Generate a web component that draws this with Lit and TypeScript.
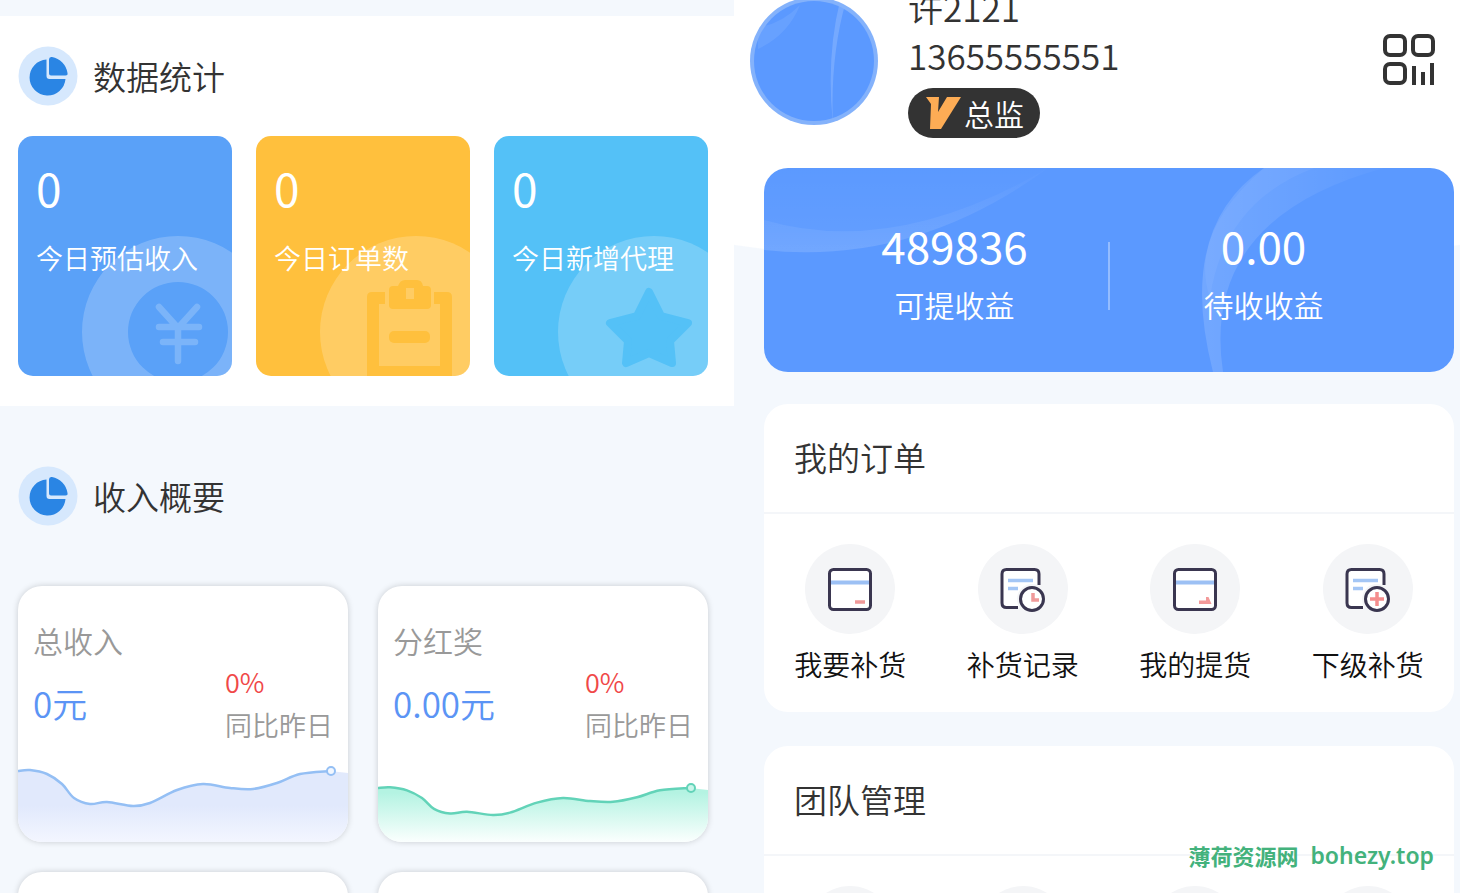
import { LitElement, html, css, svg } from "lit";
import { customElement, property } from "lit/decorators.js";

type Point = [number, number];

const WAVE: Point[] = [
  [0, 24], [12, 23], [29, 27], [44, 37], [56, 51], [72, 57], [89, 55], [115, 59],
  [132, 56], [159, 43], [185, 37], [212, 41], [235, 42], [259, 36], [282, 27], [312, 24],
];

/** Smooth curve through the points (Catmull-Rom turned into cubic Béziers). */
function curve(points: Point[]): string {
  let d = `M${points[0][0]} ${points[0][1]}`;
  for (let i = 0; i < points.length - 1; i++) {
    const p0 = points[Math.max(0, i - 1)];
    const p1 = points[i];
    const p2 = points[i + 1];
    const p3 = points[Math.min(points.length - 1, i + 2)];
    const c1 = [p1[0] + (p2[0] - p0[0]) / 6, p1[1] + (p2[1] - p0[1]) / 6];
    const c2 = [p2[0] - (p3[0] - p1[0]) / 6, p2[1] - (p3[1] - p1[1]) / 6];
    d += `C${c1.join(" ")} ${c2.join(" ")} ${p2.join(" ")}`;
  }
  return d;
}

@customElement("wave-chart")
export class WaveChart extends LitElement {
  @property() tone: "blue" | "green" = "blue";

  static styles = css`
    :host { display: block; }
    svg { display: block; width: 100%; height: 95px; }
    .line { fill: none; stroke-width: 2.5; }
    .blue { stroke: #94bff4; }
    .green { stroke: #62d3b8; }
    .dot { fill: #f2f7ff; stroke-width: 2; }
    .dot.green { fill: #c9f5ea; }
  `;

  render() {
    const blue = this.tone === "blue";
    const pts = blue ? WAVE : WAVE.map(([x, y]): Point => [x, 41 + (y - 24) * 0.77]);
    const end = pts[pts.length - 1];
    const line = curve(pts);
    const area = `${line}L330 ${end[1] + 2}V95H0Z`;
    const top = blue ? "#e1e9fc" : "#b4f3e2";
    const bottom = blue ? "#f3f6ff" : "#fbfffe";
    return html`
      <svg viewBox="0 0 330 95" preserveAspectRatio="none" aria-hidden="true">
        <defs>
          <linearGradient id="fill" x1="0" y1="0" x2="0" y2="1">
            <stop offset=${blue ? "0.5" : "0.1"} stop-color=${top}></stop>
            <stop offset="1" stop-color=${bottom}></stop>
          </linearGradient>
        </defs>
        <path d=${area} fill="url(#fill)"></path>
        <path class="line ${this.tone}" d=${line}></path>
        <circle class="dot ${this.tone}" cx=${end[0] + 1} cy=${end[1]} r="4"></circle>
      </svg>`;
  }
}

const pieIcon = html`
  <svg class="pie" viewBox="0 0 60 60" aria-hidden="true">
    <circle cx="30" cy="30" r="29.5" fill="#d6e8fd"></circle>
    <path d="M28 13.500A18 18 0 1 0 47 33H31Q28 33 28 30Z" fill="#2a85e4" transform="translate(0.500 0)"></path>
    <path d="M31 13.500Q31 10.500 34 11A19 19 0 0 1 49.500 27Q50 29.500 47.500 29.500H33Q31 29.500 31 27.500Z" fill="#2a85e4"></path>
  </svg>`;

const statArt = {
  income: svg`
    <path fill="#fff" fill-opacity=".2" fill-rule="evenodd" d="M64 196a96 96 0 1 0 192 0a96 96 0 1 0-192 0ZM110 196a50 50 0 1 0 100 0a50 50 0 1 0-100 0Z"/>
    <path d="M141 171l19 21 19-21M160 192v33M141 191h40M145 206h32" fill="none" stroke="#7bb4f9" stroke-width="6.500" stroke-linecap="round" stroke-linejoin="round"/>`,
  orders: svg`
    <circle cx="160" cy="196" r="96" fill="#fff" fill-opacity=".2"/>
    <g fill="#ffc03d">
      <path fill-rule="evenodd" d="M116 156h13v12h-6v62h61v-62h-6v-12h13q5 0 5 5v79h-85v-79q0-5 5-5Z"/>
      <path fill-rule="evenodd" d="M137 150h5q2-6 7-6h12q5 0 6 6h4q4 0 4 4v15q0 4-4 4h-34q-4 0-4-4v-15q0-4 4-4ZM150 152v11h8v-11Z"/>
      <rect x="133" y="195" width="41" height="12" rx="5"/>
    </g>`,
  agents: svg`
    <circle cx="160" cy="196" r="96" fill="#fff" fill-opacity=".2"/>
    <path d="M155 156L167 180L194 187L176 205L178 227L155 217L132 227L134 205L116 187L143 180Z" fill="#54c1f7" stroke="#54c1f7" stroke-width="8" stroke-linejoin="round"/>`,
};

const STATS = [
  { value: "0", label: "今日预估收入", tone: "income", art: statArt.income },
  { value: "0", label: "今日订单数", tone: "orders", art: statArt.orders },
  { value: "0", label: "今日新增代理", tone: "agents", art: statArt.agents },
];

const note = svg`
  <path d="M28 25.500H56Q61 25.500 61 30V63.500H28Q24 63.500 24 59V30Q24 25.500 28 25.500Z" fill="#fff"/>
  <path d="M61 41V30Q61 25.500 56.500 25.500H28.500Q24 25.500 24 30V59Q24 63.500 28.500 63.500H40" fill="none" stroke="#3a3650" stroke-width="3"/>
  <path d="M30 36.500H55" stroke="#a4c6f5" stroke-width="3.500"/>
  <path d="M30 44.500H40" stroke="#a4c6f5" stroke-width="3.500"/>
  <circle cx="54" cy="55" r="15" fill="#f4f5f7"/>
  <circle cx="54" cy="55" r="11.500" fill="#fff" stroke="#3a3650" stroke-width="3"/>`;

const box = svg`
  <rect x="24.500" y="25.500" width="41" height="40" rx="4" fill="#fff" stroke="#3a3650" stroke-width="3"/>
  <path d="M26 38.500H64" stroke="#9cc0f4" stroke-width="4"/>`;

const ORDER_ITEMS = [
  { label: "我要补货", icon: svg`${box}<path d="M50 58H60" stroke="#f09a9a" stroke-width="3.500"/>` },
  { label: "补货记录", icon: svg`${note}<path d="M55 49V56H61" fill="none" stroke="#f09a9a" stroke-width="3.500"/>` },
  { label: "我的提货", icon: svg`${box}<path d="M49 60V56.500H56V53H58.500L61.500 60Z" fill="#f39a9a"/>` },
  { label: "下级补货", icon: svg`${note}<path d="M54 48V62M47 55H61" stroke="#f58d8d" stroke-width="3.500"/>` },
];

const OVERVIEW = [
  { title: "总收入", amount: "0元", rate: "0%", tone: "blue" },
  { title: "分红奖", amount: "0.00元", rate: "0%", tone: "green" },
];

@customElement("app-root")
export class AppRoot extends LitElement {
  static styles = css`
    :host {
      display: block;
      font-family: "Noto Sans CJK SC", "Noto Sans", sans-serif;
      font-weight: 350;
      color: #333;
    }
    * { box-sizing: border-box; }
    h2, p { margin: 0; font-weight: inherit; }
    button { font: inherit; color: inherit; background: none; border: 0; padding: 0; cursor: pointer; }

    .page {
      position: relative;
      display: grid;
      grid-template-columns: 734fr 726fr;
      height: 100vh;
      overflow: hidden;
      background: #f4f8fd;
    }

    .data { padding-top: 16px; min-width: 0; }
    .section { padding: 30px 26px 30px 18px; }
    .section.white { background: #fff; }
    .section.overview { padding-top: 60px; }
    .heading { display: flex; align-items: center; gap: 15px; height: 60px; font-size: 33px; line-height: 48px; }
    .pie { width: 60px; height: 60px; flex: none; }

    .stats { display: grid; grid-template-columns: repeat(3, 1fr); gap: 24px; margin-top: 30px; }
    .stat {
      position: relative;
      height: 240px;
      padding: 24px 18px;
      border-radius: 15px;
      overflow: hidden;
      color: #fff;
    }
    .stat.income { background: #5aa1f8; }
    .stat.orders { background: #ffc03d; }
    .stat.agents { background: #54c1f7; }
    .art { position: absolute; right: 0; bottom: 0; width: 214px; height: 240px; }
    .stat-value { position: relative; font-size: 46px; line-height: 54px; font-weight: 400; }
    .stat-label { position: relative; margin-top: 24px; font-size: 27px; line-height: 40px; white-space: nowrap; }

    .cards { display: grid; grid-template-columns: repeat(2, 1fr); gap: 30px; margin-top: 60px; }
    .card {
      min-height: 256px;
      padding-top: 34px;
      border-radius: 24px;
      overflow: hidden;
      background: #fff;
      box-shadow: 0 0 6px rgba(0, 0, 0, 0.18);
    }
    .card-title { padding-left: 15px; font-size: 30px; line-height: 40px; color: #999; }
    .figures { display: flex; justify-content: space-between; align-items: center; padding: 0 15px 1px 15px; }
    .amount { font-size: 35px; line-height: 48px; color: #5b94f5; }
    .compare { font-size: 27px; line-height: 43px; color: #999; }
    .rate { color: #f04848; }

    .mine {
      min-width: 0;
      padding: 0 6px 0 30px;
      background: radial-gradient(120% 270px at 50% 0, #fff 99.600%, #f4f8fd 100%);
    }
    .profile { display: flex; align-items: center; margin: -17px 18px 30px -14px; }
    .avatar { width: 128px; height: 128px; flex: none; }
    .who { flex: 1; margin-left: 30px; font-size: 35px; line-height: 48px; }
    .badge {
      display: inline-flex;
      align-items: center;
      gap: 3px;
      height: 50px;
      margin-top: 9px;
      padding: 0 16px 0 17px;
      border-radius: 25px;
      background: #333;
      color: #fff;
      font-size: 30px;
      line-height: 40px;
      vertical-align: top;
    }
    .vip { width: 36px; height: 32px; }
    .qr { width: 54px; height: 54px; }
    .qr svg { display: block; width: 100%; height: 100%; }

    .wallet {
      position: relative;
      display: grid;
      grid-template-columns: 1fr 2px 1fr;
      padding: 50px 37px 48px;
      border-radius: 24px;
      overflow: hidden;
      background: #5b99ff;
      color: #fff;
      text-align: center;
    }
    .swirl { position: absolute; inset: 0; width: 100%; height: 100%; }
    .sum { position: relative; }
    .sum-value { font-size: 44px; line-height: 54px; font-weight: 400; }
    .sum-label { margin-top: 12px; font-size: 30px; line-height: 40px; }
    .divider { position: relative; height: 68px; margin-top: 24px; background: rgba(255, 255, 255, 0.35); }

    .panel { margin-top: 32px; border-radius: 24px; background: #fff; }
    .panel + .panel { margin-top: 34px; }
    .panel-title { padding: 29px 30px 31px; font-size: 33px; line-height: 48px; border-bottom: 2px solid #f4f6f9; }
    .items { display: grid; grid-template-columns: repeat(4, 1fr); padding: 30px 0 28px; }
    .item { display: flex; flex-direction: column; align-items: center; gap: 10px; font-size: 28px; line-height: 40px; color: #111; }
    .round { width: 90px; height: 90px; }

    .mark {
      position: absolute;
      right: 26px;
      bottom: 22px;
      display: flex;
      gap: 12px;
      font-size: 22px;
      line-height: 32px;
      font-weight: 700;
      color: #43b27c;
    }
    .mark-site { font-family: "Noto Sans", sans-serif; font-size: 23px; font-weight: 600; }
  `;

  private items() {
    return html`
      <div class="items">
        ${ORDER_ITEMS.map((item) => html`
          <button class="item" type="button">
            <svg class="round" viewBox="0 0 90 90" aria-hidden="true">
              <circle cx="45" cy="45" r="45" fill="#f4f5f7"></circle>
              ${item.icon}
            </svg>
            <span>${item.label}</span>
          </button>`)}
      </div>`;
  }

  private overviewCard(card: (typeof OVERVIEW)[number]) {
    return html`
      <article class="card">
        <p class="card-title">${card.title}</p>
        <div class="figures">
          <p class="amount">${card.amount}</p>
          <div class="compare">
            <p class="rate">${card.rate}</p>
            <p>同比昨日</p>
          </div>
        </div>
        <wave-chart tone=${card.tone}></wave-chart>
      </article>`;
  }

  render() {
    return html`
      <main class="page">
        <div class="data">
          <section class="section white">
            <h2 class="heading">${pieIcon}数据统计</h2>
            <div class="stats">
              ${STATS.map((s) => html`
                <div class="stat ${s.tone}">
                  <svg class="art" viewBox="0 0 214 240" aria-hidden="true">${s.art}</svg>
                  <p class="stat-value">${s.value}</p>
                  <p class="stat-label">${s.label}</p>
                </div>`)}
            </div>
          </section>
          <section class="section overview">
            <h2 class="heading">${pieIcon}收入概要</h2>
            <div class="cards">
              ${OVERVIEW.map((c) => this.overviewCard(c))}
              <article class="card"></article>
              <article class="card"></article>
            </div>
          </section>
        </div>

        <div class="mine">
          <header class="profile">
            <svg class="avatar" viewBox="0 0 128 128" aria-hidden="true">
              <defs><clipPath id="face"><circle cx="64" cy="64" r="60"></circle></clipPath></defs>
              <circle cx="64" cy="64" r="64" fill="#84b2fb"></circle>
              <circle cx="64" cy="64" r="60" fill="#5b99ff"></circle>
              <g clip-path="url(#face)">
                <path d="M50 8Q38 38 8 52V30Q30 28 50 8Z" fill="#fff" fill-opacity=".08"></path>
                <path d="M90 4Q76 60 83 128Q80 60 96 4Z" fill="#fff" fill-opacity=".16"></path>
              </g>
            </svg>
            <div class="who">
              <p>许2121</p>
              <p>13655555551</p>
              <span class="badge">
                <svg class="vip" viewBox="0 0 36 32" aria-hidden="true">
                  <path d="M1 0H14L13 15L22 0H36L16 32H5L6 7Z" fill="#fdac55"></path>
                </svg>总监
              </span>
            </div>
            <button class="qr" type="button" aria-label="二维码">
              <svg viewBox="0 0 54 54" fill="none" stroke="#333" stroke-width="4" aria-hidden="true">
                <rect x="3" y="2" width="20" height="19" rx="5"></rect>
                <rect x="31" y="2" width="20" height="19" rx="5"></rect>
                <rect x="3" y="30" width="20" height="19" rx="5"></rect>
                <path d="M32 32V51M41 38V51M50 29V51"></path>
              </svg>
            </button>
          </header>

          <section class="wallet">
            <svg class="swirl" viewBox="0 0 690 204" preserveAspectRatio="none" aria-hidden="true">
              <defs>
                <linearGradient id="sweep" x1="0" y1="0" x2="0" y2="1">
                  <stop offset="0" stop-color="#fff" stop-opacity="0.010"></stop>
                  <stop offset="1" stop-color="#fff" stop-opacity="0.090"></stop>
                </linearGradient>
                <linearGradient id="fan" x1="0" y1="0" x2="1" y2="0">
                  <stop offset="0" stop-color="#fff" stop-opacity="0.140"></stop>
                  <stop offset="1" stop-color="#fff" stop-opacity="0.020"></stop>
                </linearGradient>
              </defs>
              <path d="M0 52Q130 90 284 0Q150 98 0 82Z" fill="url(#sweep)"></path>
              <path d="M0 0H284Q150 98 0 82Z" fill="url(#sweep)" opacity=".6"></path>
              <path d="M500 0Q412 60 449 204H459Q436 50 620 0Z" fill="url(#fan)"></path>
              <path d="M500 0Q424 66 446 130Q460 34 550 0Z" fill="#fff" fill-opacity=".05"></path>
            </svg>
            <div class="sum">
              <p class="sum-value">489836</p>
              <p class="sum-label">可提收益</p>
            </div>
            <div class="divider"></div>
            <div class="sum">
              <p class="sum-value">0.00</p>
              <p class="sum-label">待收收益</p>
            </div>
          </section>

          <section class="panel">
            <h2 class="panel-title">我的订单</h2>
            ${this.items()}
          </section>
          <section class="panel">
            <h2 class="panel-title">团队管理</h2>
            ${this.items()}
          </section>
        </div>

        <div class="mark"><span>薄荷资源网</span><span class="mark-site">bohezy.top</span></div>
      </main>`;
  }
}
